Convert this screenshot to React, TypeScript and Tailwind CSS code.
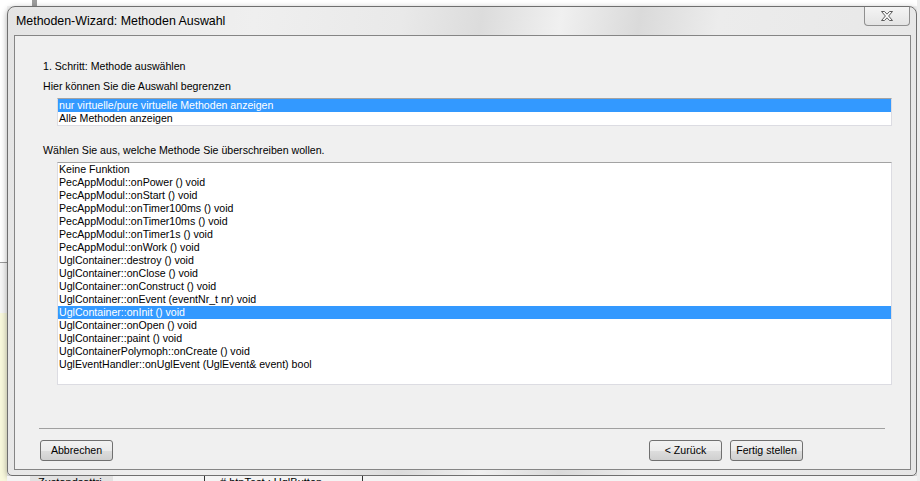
const methods = [
  "Keine Funktion",
  "PecAppModul::onPower () void",
  "PecAppModul::onStart () void",
  "PecAppModul::onTimer100ms () void",
  "PecAppModul::onTimer10ms () void",
  "PecAppModul::onTimer1s () void",
  "PecAppModul::onWork () void",
  "UglContainer::destroy () void",
  "UglContainer::onClose () void",
  "UglContainer::onConstruct () void",
  "UglContainer::onEvent (eventNr_t nr) void",
  "UglContainer::onInit () void",
  "UglContainer::onOpen () void",
  "UglContainer::paint () void",
  "UglContainerPolymoph::onCreate () void",
  "UglEventHandler::onUglEvent (UglEvent& event) bool",
];

const filters = ["nur virtuelle/pure virtuelle Methoden anzeigen", "Alle Methoden anzeigen"];

function ListBox({ items, selected, height }: { items: string[]; selected: number; height: string }) {
  return (
    <div
      className={`ml-[42px] w-[835px] ${height} border border-[#dcdce2] border-t-[#a3a3a3] bg-white`}
    >
      {items.map((item, i) => (
        <div
          key={item}
          className={`h-[13px] pl-[1px] leading-[13px] whitespace-nowrap ${
            i === selected ? "bg-[#3399ff] text-white" : "text-black"
          }`}
        >
          {item}
        </div>
      ))}
    </div>
  );
}

function WinButton({ label }: { label: string }) {
  return (
    <button className="h-[21px] w-[73px] rounded-[3px] border border-[#707070] bg-[linear-gradient(#f2f2f2_0%,#ebebeb_50%,#dddddd_51%,#cfcfcf_100%)] text-[10.6px] leading-[19px] text-black">
      {label}
    </button>
  );
}

export default function App() {
  return (
    <div className="flex h-[481px] w-[920px] overflow-hidden bg-[#f4f4f4] font-['Liberation_Sans',Arial,sans-serif] text-[10.6px]">
      {/* left background strip */}
      <div className="flex w-[7px] flex-col">
        <div className="h-[262px] bg-white" />
        <div className="h-px bg-[#9a9a9a]" />
        <div className="h-[50px] bg-[#f6f6f6]" />
        <div className="flex-1 bg-[#f8f8dc]" />
      </div>

      <div className="flex w-[910px] flex-col">
        <div className="flex h-[6px] bg-white">
          <div className="w-[25px]" />
          <div className="w-[5px] bg-[#9c9c9c]" />
        </div>

        {/* window */}
        <div className="flex h-[470px] flex-col rounded-t-[8px] rounded-b-[5px] border border-[#6f6f6f] bg-[linear-gradient(100deg,#e4e4e4_0%,#efefef_25%,#e9e9e9_40%,#dcdcdc_48%,#f0f0f0_56%,#dadada_64%,#ececec_72%,#e6e6e6_100%)] shadow-[0_2px_6px_rgba(0,0,0,0.35)]">
          {/* title bar */}
          <div className="flex h-[28px] items-start justify-between">
            <div className="ml-[8px] mt-[6px] text-[12.4px] leading-[16px] text-black">
              Methoden-Wizard: Methoden Auswahl
            </div>
            <div className="mr-[6px] flex h-[19px] w-[46px] items-center justify-center rounded-b-[4px] border border-t-0 border-[#8f8f8f] bg-[linear-gradient(#f4f4f4,#e4e4e4)]">
              <svg width="12" height="10" viewBox="0 0 12 10">
                <path
                  d="M0.5 0.5H3.5L6 3.2L8.5 0.5H11.5L7.6 5L11.5 9.5H8.5L6 6.8L3.5 9.5H0.5L4.4 5Z"
                  fill="#fbfbfb"
                  stroke="#5b5b5b"
                  strokeWidth="1"
                  strokeLinejoin="round"
                />
              </svg>
            </div>
          </div>

          {/* client area */}
          <div className="ml-[6px] flex h-[435px] w-[897px] flex-col border border-[#858585] bg-[#f0f0f0]">
            <div className="ml-[28px] mt-[24px] h-[13px] leading-[13px]">1. Schritt: Methode auswählen</div>
            <div className="ml-[28px] mt-[7px] h-[13px] leading-[13px]">Hier können Sie die Auswahl begrenzen</div>
            <div className="mt-[5px]">
              <ListBox items={filters} selected={0} height="h-[28px]" />
            </div>
            <div className="ml-[28px] mt-[18px] h-[13px] leading-[13px]">
              Wählen Sie aus, welche Methode Sie überschreiben wollen.
            </div>
            <div className="mt-[5px]">
              <ListBox items={methods} selected={11} height="h-[223px]" />
            </div>

            <div className="ml-[24px] mt-[43px] h-px w-[846px] bg-[#a0a0a0]" />

            <div className="mt-[11px] flex items-center justify-between pl-[25px] pr-[107px]">
              <WinButton label="Abbrechen" />
              <div className="flex gap-[8px]">
                <WinButton label="< Zurück" />
                <WinButton label="Fertig stellen" />
              </div>
            </div>
          </div>
        </div>

        {/* background below the window */}
        <div className="flex h-[5px] bg-[#f4f4f4] text-[11px] leading-[11px]">
          <div className="ml-[23px] w-[83px] overflow-hidden bg-[#e2e2e2] pl-[8px] pt-[1px]">Zustandsattri</div>
          <div className="ml-[91px] w-px bg-[#333]" />
          <div className="ml-[15px] overflow-hidden pt-[1px]"># btnTest : UglButton</div>
          <div className="ml-[40px] w-px bg-[#333]" />
        </div>
      </div>

      <div className="w-[3px] bg-[#ededed]" />
    </div>
  );
}
